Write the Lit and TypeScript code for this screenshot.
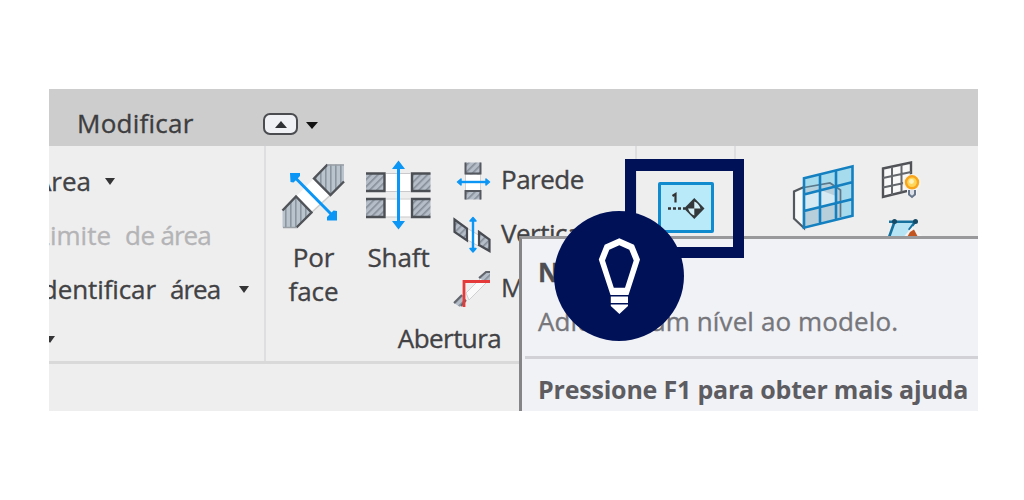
import { LitElement, html, css, svg } from "lit";
import { customElement } from "lit/decorators.js";

const hatch = svg`
  <defs>
    <pattern id="v" width="5" height="10" patternUnits="userSpaceOnUse">
      <rect width="5" height="10" fill="#b9c4cd"/><rect width="1.6" height="10" fill="#8b96a0"/>
    </pattern>
    <pattern id="d" width="5" height="5" patternUnits="userSpaceOnUse" patternTransform="rotate(45)">
      <rect width="5" height="5" fill="#b4bdc8"/><rect width="1.6" height="5" fill="#848d98"/>
    </pattern>
  </defs>`;

const icons: Record<string, { box: string; art: unknown }> = {
  face: {
    box: "279 160 69 72",
    art: svg`
      <path d="M314 178.5L330.500 195L311.500 212.500L296 196.500Z" fill="#fff"/>
      <path d="M330.500 195L311.500 212.500" stroke="#ccc" stroke-width="1.500"/>
      <path d="M314 178.500L327.500 164.500H344V181.500L330.500 195Z" fill="url(#v)"/>
      <path d="M282.500 210.500L296 196.500L311.500 212.500L296.500 227.500H282.500Z" fill="url(#v)"/>
      <path d="M327.500 164.500L314 178.500L330.500 195L344 181.500M282.500 210.500L296 196.500L311.500 212.500L296.500 227.500" fill="none" stroke="#505358" stroke-width="2.400"/>
      <path d="M327 165H344M283 227.500H297" stroke="#999fa5" stroke-width="1.500"/>
      <path d="M294 176.500L333 216" stroke="#0b95f5" stroke-width="3"/>
      <path d="M290 173H300V176L293.500 182.500L290.500 182ZM337 220.500H327L327 217L333.500 210.500L337 211Z" fill="#0b95f5"/>`,
  },
  shaft: {
    box: "362 159 73 73",
    art: svg`
      <path d="M385 173H411V191.500H385ZM385 198.500H411V217H385Z" fill="#fff"/>
      <path d="M366 173H385V191.500H366ZM411 173H430.500V191.500H411ZM366 198.500H385V217.500H366ZM411 198.500H430.500V217.500H411Z" fill="url(#d)"/>
      <path d="M366 173.500H384.500V191H366M430.500 173.500H412V191H430.500M366 199H384.500V217H366M430.500 199H412V217H430.500" fill="none" stroke="#4c4f54" stroke-width="2.400"/>
      <path d="M386 173.500H411M386 191.500H411M386 199H411M386 217H411" stroke="#c9c9cb" stroke-width="1.200"/>
      <path d="M398.500 166V224" stroke="#0b95f5" stroke-width="3"/>
      <path d="M398.500 160.500L405 169H392ZM398.500 229.500L405 221H392Z" fill="#0b95f5"/>`,
  },
  wall: {
    box: "453 160 40 40",
    art: svg`
      <path d="M465.500 173H480.500V190H465.500Z" fill="#fff" stroke="#d2d2d2"/>
      <path d="M465 161.500H481V173.500H465ZM465 189H481V198.500H465Z" fill="url(#d)"/>
      <path d="M465.500 161.500V172.500H480.500V161.500M465.500 198.500V190H480.500V198.500" fill="none" stroke="#55585e" stroke-width="2"/>
      <path d="M460 181H487" stroke="#0b95f5" stroke-width="2.400"/>
      <path d="M457.500 181L461 178V184ZM489.500 181L486 178V184Z" fill="#0b95f5" stroke="#0b95f5" stroke-width="1.500" stroke-linejoin="round"/>`,
  },
  vertical: {
    box: "453 215 40 40",
    art: svg`
      <path d="M467.500 228.500L478.500 235V246L467.500 240Z" fill="#fff" stroke="#ccc"/>
      <path d="M454.500 219.500L467 228.500V240.500L454.500 232ZM479 232L489.500 239.500V251L479 245Z" fill="url(#d)" stroke="#484b51" stroke-width="2.200"/>
      <path d="M473 220V249" stroke="#0b95f5" stroke-width="2.400"/>
      <path d="M473 217.500L476 221H470ZM473 252L476 248.500H470Z" fill="#0b95f5" stroke="#0b95f5" stroke-width="1.500" stroke-linejoin="round"/>`,
  },
  dormer: {
    box: "453 269 40 40",
    art: svg`
      <path d="M466 293L482 277L488 281L469 300Z" fill="#fafafa" stroke="#d0d0d2"/>
      <path d="M479 278L486 271.500H490V280L487 283ZM454 303L462 295L466 300L460 307Z" fill="url(#d)"/>
      <path d="M479 278L486 272H490M454 303L462 295M461 306L466 300" fill="none" stroke="#62666c" stroke-width="2"/>
      <path d="M464 307V281.500H490" fill="none" stroke="#e43a3a" stroke-width="2.800"/>`,
  },
  level: {
    box: "660 185 50 45",
    art: svg`
      <path d="M667 208.500H684" stroke="#333" stroke-width="2.400" stroke-dasharray="3 2"/>
      <path d="M671.500 196L674.500 194V202.500" fill="none" stroke="#333" stroke-width="2.200"/>
      <path d="M693.300 198L703.500 208.500L693.300 219L683 208.500Z" fill="#33383b"/>
      <path d="M693.300 208.500V201.500Q697.500 203 699.500 208.500ZM693.300 208.500V215.500Q689 214 687 208.500Z" fill="#d3f0f8"/>`,
  },
  plane: {
    box: "790 162 68 72",
    art: svg`
      <path d="M804 187L794 191.500V218.500L804 228Z" fill="#f8fafa" stroke="#53595e" stroke-width="2.200"/>
      <path d="M804 178.300L853 166V216L804 228Z" fill="#a5dbed"/>
      <path d="M804 189L830 184L840 190V218.500L804 228Z" fill="#b7cfdb"/>
      <path d="M804 194L820 190L836 196V204L804 210Z" fill="#d5eaf2"/>
      <path d="M804 187.500L830 183L840.500 190V217" fill="none" stroke="#5b788b" stroke-width="1.700"/>
      <path d="M804 178.300L852.500 166.300V215.800L804 227.700ZM820 174V224M836 170V220M804 194.500L853 182M804 211L853 199" fill="none" stroke="#1480c0" stroke-width="2.600"/>`,
  },
  show: {
    box: "880 159 42 42",
    art: svg`
      <path d="M883 168.500L911 162.500V190L883 197Z" fill="#f8f8f8" stroke="#505257" stroke-width="2.400"/>
      <path d="M892 167V195M901.500 165V192M883 178L911 172M883 187.500L911 181.500" stroke="#64676c" stroke-width="2"/>
      <circle cx="912" cy="183" r="9" fill="#f7f3e8"/>
      <path d="M907 189H917V195L914 198H911L907 195Z" fill="#f5f5f5"/>
      <path d="M909 190V194.500L912 197L915 194.500V190" fill="#dce0e8" stroke="#68778c" stroke-width="2"/>
      <circle cx="912" cy="182.300" r="6" fill="#ffd65a" stroke="#f8a51b" stroke-width="2.400"/>
      <circle cx="911.500" cy="181.500" r="2.400" fill="#fff3bd"/>`,
  },
  refplane: {
    box: "884 217 38 38",
    art: svg`
      <path d="M893 222H915L907 246H886Z" fill="#b7e4f5"/>
      <path d="M889 221.700H917M894.500 222L888 240M915 222L909 230" fill="none" stroke="#15719e" stroke-width="2.600"/>
      <circle cx="894.500" cy="221.500" r="2.500" fill="#164a66"/><circle cx="915.500" cy="221.500" r="2.500" fill="#164a66"/>
      <path d="M901 240L913 226L922 236V240Z" fill="#f3f3f3"/>
      <path d="M906 239L910 232L914 229.500L919 239Z" fill="#c2541f"/>`,
  },
  bulb: {
    box: "598 236 43 80",
    art: svg`
      <path fill-rule="evenodd" fill="#fff" d="M619.300 238.300L634 244.700L640 259.500L628.500 295H610.500L598.800 259.500L604.700 244.700ZM619.300 245.300L609.300 249.700L605 260.500L613.800 287.700H625L633.700 260.500L629.300 249.700Z"/>
      <path fill="#fff" d="M610.800 296.500H628V303H610.800ZM610.800 304.500H628V306L619.400 314L610.800 306Z"/>`,
  },
};

@customElement("tool-icon")
class ToolIcon extends LitElement {
  static properties = { name: { type: String } };
  declare name: string;
  static styles = css`
    :host { display: block; flex: none; }
    svg { display: block; }
  `;
  render() {
    const { box, art } = icons[this.name];
    const [, , w, h] = box.split(" ");
    return html`<svg width=${w} height=${h} viewBox=${box}>${hatch}${art}</svg>`;
  }
}

@customElement("app-root")
class AppRoot extends LitElement {
  static styles = css`
    :host {
      display: block; position: relative; width: 1024px; height: 500px; overflow: hidden;
      box-sizing: border-box; padding: 89px 46px 89px 49px; background: #fff;
      font: 26px/54px "Open Sans", "Noto Sans", sans-serif; color: #424244;
      white-space: nowrap; -webkit-text-stroke: .35px currentColor;
    }
    * { box-sizing: border-box; }
    .shot { position: relative; display: flex; flex-direction: column; height: 322px; overflow: hidden; background: #eeeeef; }
    .tabs { display: flex; align-items: center; height: 57px; flex: none; background: #cdcdcd; padding: 11px 0 0 28px; color: #3d3d3f; }
    .tab { width: 186px; letter-spacing: .25px; line-height: 52px; }
    .toggle { display: grid; place-items: center; width: 35px; height: 22px; margin-top: 2px; border: 2px solid #4a4c50; border-radius: 7px; background: #eff1f5; }
    .up { border: 6px solid transparent; border-top: 0; border-bottom: 7px solid #303134; }
    .down { border: 5.500px solid transparent; border-bottom: 0; border-top: 7px solid #343436; }
    .tabs .down { margin: 5px 0 0 8px; border-top-color: #111; border-left-width: 6px; border-right-width: 6px; }
    .ribbon { display: flex; height: 218px; flex: none; border-bottom: 3px solid #d9d9da; }
    .panel { display: flex; flex-direction: column; border-right: 2px solid #dedee0; height: 215px; flex: none; }
    .area { width: 217px; padding-top: 8px; }
    .line { display: flex; align-items: center; height: 54px; }
    .first { display: flex; justify-content: flex-end; flex: none; }
    .w1 { width: 42px; }
    .w2 { width: 62px; }
    .w3 { width: 107px; letter-spacing: -.1px; }
    .first + .down { margin-left: 14px; }
    .off { color: #b4b4b6; line-height: 52px; }
    .de { margin-left: 14px; letter-spacing: -.5px; }
    .noun { margin-left: 14px; width: 50px; letter-spacing: -1px; }
    .de + .noun { margin-left: 6px; }
    .noun + .down { margin-left: 19px; }
    .more { align-self: flex-start; margin: 20px 0 0 -4px; }
    .opening { width: 371px; }
    .tools { display: flex; height: 170px; flex: none; }
    .tool { display: flex; flex-direction: column; align-items: center; line-height: 34px; text-align: center; padding-top: 13px; }
    .tool.face { margin-left: 13px; width: 69px; padding-top: 14px; letter-spacing: -.1px; }
    .tool.shaft { margin-left: 14px; width: 73px; letter-spacing: -.1px; }
    .cap { padding-top: 8px; }
    .small { margin-left: 18px; padding-top: 6px; letter-spacing: -.5px; }
    .small .line { gap: 8px; }
    .small tool-icon { margin-top: 3px; }
    .title { text-align: center; line-height: 44px; letter-spacing: -.55px; padding-right: 2px; }
    .datum { width: 99px; align-items: center; padding-top: 36px; }
    .level { display: grid; place-items: center; width: 56px; height: 51px; overflow: hidden; background: #b9eafa; border: 3px solid #118ace; border-radius: 2px; }
    .work { flex: 1; flex-direction: row; border: 0; padding: 16px 0 0 54px; }
    .views { margin: -3px 0 0 22px; }
    .views tool-icon + tool-icon { margin: 16px 0 0 4px; }
    .tip { position: absolute; left: 470px; top: 147px; width: 459px; height: 175px; background: #f1f2f6; border-left: 3px solid #858587; border-top: 3px solid #99999b; padding-left: 16px; color: #76767b; }
    .name { height: 52px; padding-top: 6px; font-weight: 700; color: #4d4d52; }
    .desc { height: 65px; line-height: 60px; letter-spacing: .11px; padding-right: 40px; }
    .help { margin-left: -13px; padding-left: 13px; border-top: 3px solid #d2d2d6; font-weight: 700; font-size: 25px; color: #5c5c61; line-height: 61px; letter-spacing: -.2px; -webkit-text-stroke: 0; }
    .frame { position: absolute; left: 625px; top: 159px; width: 119px; height: 99px; border: 11px solid #001158; border-top-width: 12px; }
    .badge { position: absolute; left: 554px; top: 211px; width: 130px; height: 130px; border-radius: 50%; background: #001158; display: grid; place-items: center; }
  `;
  render() {
    const row = (icon: string, label: string) =>
      html`<div class="line"><tool-icon name=${icon}></tool-icon><span>${label}</span></div>`;
    return html`
      <div class="shot">
        <div class="tabs">
          <span class="tab">Modificar</span>
          <span class="toggle"><i class="up"></i></span>
          <i class="down"></i>
        </div>
        <div class="ribbon">
          <div class="panel area">
            <div class="line"><span class="first w1"><span>Área</span></span><i class="down"></i></div>
            <div class="line off"><span class="first w2"><span>Limite</span></span><span class="de">de</span><span class="noun">área</span></div>
            <div class="line"><span class="first w3"><span>Identificar</span></span><span class="noun">área</span><i class="down"></i></div>
            <i class="down more"></i>
          </div>
          <div class="panel opening">
            <div class="tools">
              <div class="tool face"><tool-icon name="face"></tool-icon><div class="cap">Por<br>face</div></div>
              <div class="tool shaft"><tool-icon name="shaft"></tool-icon><div class="cap">Shaft</div></div>
              <div class="small">${row("wall", "Parede")}${row("vertical", "Vertical")}${row("dormer", "Mansarda")}</div>
            </div>
            <div class="title">Abertura</div>
          </div>
          <div class="panel datum"><div class="level"><tool-icon name="level"></tool-icon></div></div>
          <div class="panel work">
            <tool-icon name="plane"></tool-icon>
            <div class="views"><tool-icon name="show"></tool-icon><tool-icon name="refplane"></tool-icon></div>
          </div>
        </div>
        <div class="tip">
          <div class="name">Nível</div>
          <div class="desc">Adiciona um nível ao modelo.</div>
          <div class="help">Pressione F1 para obter mais ajuda</div>
        </div>
      </div>
      <div class="frame"></div>
      <div class="badge"><tool-icon name="bulb"></tool-icon></div>
    `;
  }
}
